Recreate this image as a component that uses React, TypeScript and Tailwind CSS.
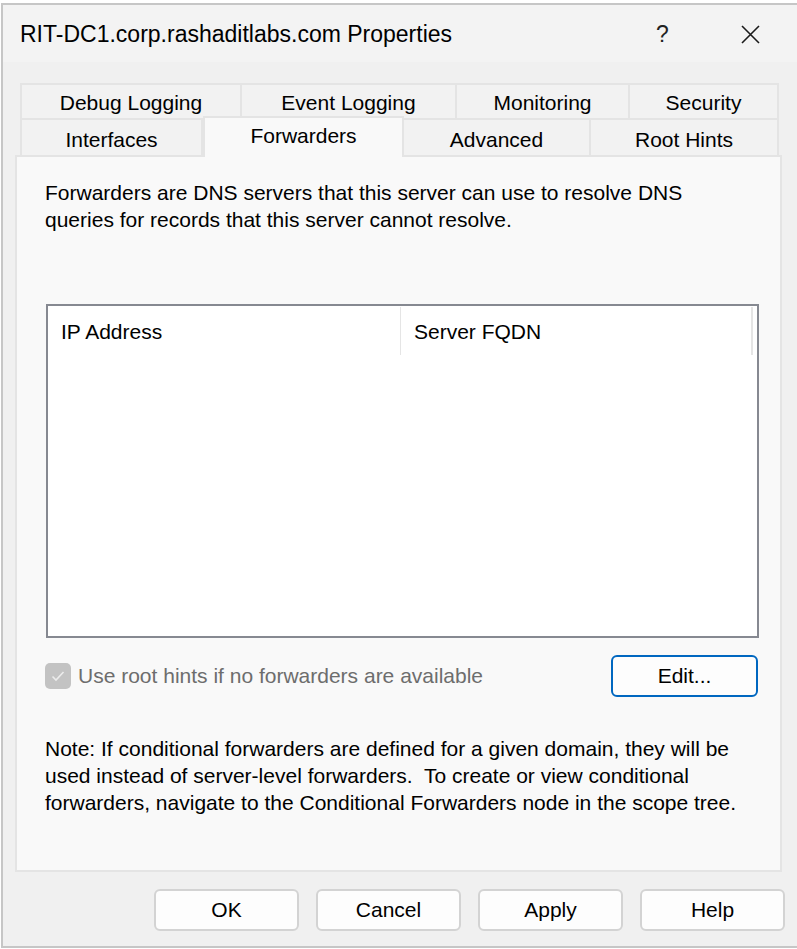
import React from "react";

const font = { fontFamily: '"Liberation Sans", Arial, sans-serif' };

const topTabs = [
  { label: "Debug Logging", w: "w-[222px]", first: true },
  { label: "Event Logging", w: "w-[215px]", first: false },
  { label: "Monitoring", w: "w-[173px]", first: false },
  { label: "Security", w: "w-[149px]", first: false },
];

const DialogButton: React.FC<{ label: string }> = ({ label }) => (
  <button
    type="button"
    className="w-[145px] h-[42px] rounded-[6px] border-2 border-[#d3d3d3] bg-[#fdfdfd] text-[21px] text-black"
  >
    {label}
  </button>
);

const App: React.FC = () => {
  return (
    <div className="w-[797px] h-[949px] bg-white pt-[3px] pl-[1px] overflow-hidden" style={font}>
      <div className="w-[820px] h-[945px] border-t-2 border-l-2 border-b-2 border-[#c6c6c6] bg-[#f0f0f0] flex flex-col">
        {/* title bar */}
        <div className="h-[57px] bg-[#f3f3f3] flex items-center pl-[17px] pt-[2px] shrink-0">
          <span className="text-[23px] text-black">
            RIT-DC1.corp.rashaditlabs.com Properties
          </span>
          <span className="ml-[204px] text-[23px] text-[#222]">?</span>
          <svg className="ml-[72px]" width="19" height="19" viewBox="0 0 19 19">
            <path d="M1 1 L18 18 M18 1 L1 18" stroke="#1a1a1a" strokeWidth="1.6" />
          </svg>
        </div>

        <div className="pl-[13px] pt-[21px]">
          {/* tabs row 1 */}
          <div className="flex pl-[4px] h-[35px]">
            {topTabs.map((t) => (
              <div
                key={t.label}
                className={`${t.w} border-2 border-b-0 ${t.first ? "" : "border-l-0"} border-[#e4e4e4] bg-[#f2f2f2] flex justify-center pt-[2px] text-[21px] text-black`}
              >
                {t.label}
              </div>
            ))}
          </div>
          {/* tabs row 2 */}
          <div className="flex pl-[4px] h-[37px] items-end relative z-10">
            <div className="w-[183px] h-[37px] border-2 border-b-0 border-[#e4e4e4] bg-[#f2f2f2] flex justify-center pt-[4px] text-[21px] text-black">
              Interfaces
            </div>
            <div className="w-[201px] h-[41px] -mb-[2px] border-2 border-b-0 border-[#e4e4e4] bg-[#f9f9f9] flex justify-center pt-[2px] text-[21px] text-black">
              Forwarders
            </div>
            <div className="w-[187px] h-[37px] border-2 border-b-0 border-l-0 border-[#e4e4e4] bg-[#f2f2f2] flex justify-center pt-[4px] text-[21px] text-black">
              Advanced
            </div>
            <div className="w-[188px] h-[37px] border-2 border-b-0 border-l-0 border-[#e4e4e4] bg-[#f2f2f2] flex justify-center pt-[4px] text-[21px] text-black">
              Root Hints
            </div>
          </div>

          {/* panel */}
          <div className="w-[767px] h-[717px] -ml-[1px] border-2 border-[#e4e4e4] bg-[#f9f9f9] pl-[28px] pt-[22px] text-[21px] text-black leading-[27px]">
            <p className="w-[700px]">
              Forwarders are DNS servers that this server can use to resolve DNS queries for records that this server cannot resolve.
            </p>

            <div className="mt-[71px] ml-[1px] w-[713px] h-[334px] border-2 border-[#868991] bg-white">
              <div className="flex h-[50px] pt-[1px]">
                <div className="w-[353px] h-[48px] border-r border-[#e5e5e5] flex items-center pl-[13px]">
                  IP Address
                </div>
                <div className="w-[352px] h-[48px] border-r-2 border-[#e5e5e5] flex items-center pl-[13px]">
                  Server FQDN
                </div>
              </div>
            </div>

            <div className="flex items-center mt-[17px] h-[41px]">
              <div className="w-[26px] h-[26px] rounded-[5px] bg-[#c3c3c3] flex items-center justify-center">
                <svg width="14" height="12" viewBox="0 0 14 12">
                  <path d="M1.5 6.5 L5 10 L12.5 2" fill="none" stroke="#ececec" strokeWidth="1.6" />
                </svg>
              </div>
              <span className="ml-[7px] text-[#6d6d6d]">Use root hints if no forwarders are available</span>
              <button
                type="button"
                className="ml-auto mr-[22px] w-[147px] h-[42px] rounded-[6px] border-2 border-[#0067c0] bg-[#fdfdfd] text-[21px] text-black"
              >
                Edit...
              </button>
            </div>

            <p className="mt-[39px] w-[715px]">
              Note: If conditional forwarders are defined for a given domain, they will be used instead of server-level forwarders.&nbsp; To create or view conditional forwarders, navigate to the Conditional Forwarders node in the scope tree.
            </p>
          </div>

          {/* bottom buttons */}
          <div className="flex gap-[17px] pl-[138px] mt-[17px]">
            <DialogButton label="OK" />
            <DialogButton label="Cancel" />
            <DialogButton label="Apply" />
            <DialogButton label="Help" />
          </div>
        </div>
      </div>
    </div>
  );
};

export default App;
